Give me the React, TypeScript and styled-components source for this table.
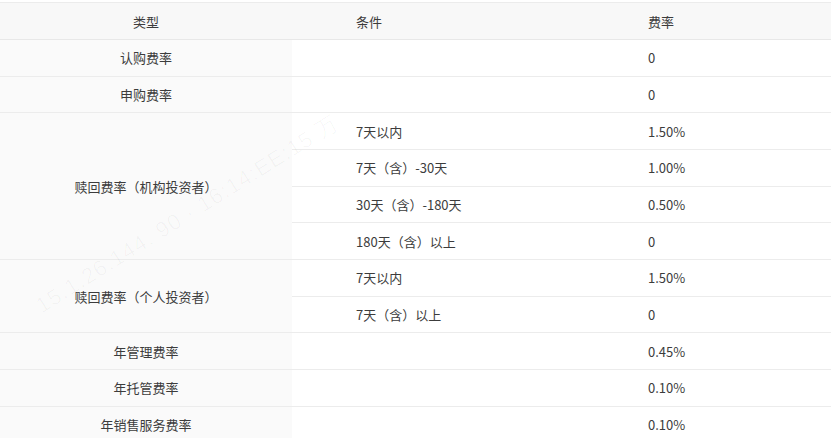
import React from "react";
import styled, { createGlobalStyle } from "styled-components";

const GlobalStyle = createGlobalStyle`
  html, body {
    margin: 0;
    padding: 0;
    background: #fff;
  }
  body {
    font-family: "Noto Sans CJK SC", "Noto Sans", sans-serif;
    color: #3c3c3c;
  }
`;

const Wrap = styled.div`
  position: relative;
  width: 832px;
  height: 438px;
  overflow: hidden;
  padding-top: 2px;
  box-sizing: border-box;
`;

const Table = styled.table`
  width: 831px;
  border-collapse: collapse;
  table-layout: fixed;
  font-size: 13px;
  border-top: 1px solid #ececec;
`;

const Th = styled.th<{ $left?: boolean }>`
  height: 36px;
  padding: 0 0 0 ${(p) => (p.$left ? "64px" : "0")};
  background: #f8f8f8;
  font-weight: normal;
  color: #3c3c3c;
  text-align: ${(p) => (p.$left ? "left" : "center")};
  border-bottom: 1px solid #e8e8e8;
`;

const TypeCell = styled.td`
  height: 35.67px;
  padding: 0;
  background: #fafafa;
  text-align: center;
  border-bottom: 1px solid #ececec;
`;

const Cell = styled.td`
  height: 35.67px;
  padding: 0 0 0 64px;
  background: #fff;
  text-align: left;
  border-bottom: 1px solid #ececec;
`;

const Watermark = styled.div`
  position: absolute;
  left: 30px;
  top: 295px;
  transform: rotate(-32deg);
  transform-origin: left top;
  font-family: "Liberation Sans", sans-serif;
  font-size: 22px;
  letter-spacing: 1px;
  color: rgba(0, 0, 0, 0.03);
  white-space: nowrap;
  pointer-events: none;
`;

type Row = { type?: string; span?: number; cond: string; rate: string };

const rows: Row[] = [
  { type: "认购费率", cond: "", rate: "0" },
  { type: "申购费率", cond: "", rate: "0" },
  { type: "赎回费率（机构投资者）", span: 4, cond: "7天以内", rate: "1.50%" },
  { cond: "7天（含）-30天", rate: "1.00%" },
  { cond: "30天（含）-180天", rate: "0.50%" },
  { cond: "180天（含）以上", rate: "0" },
  { type: "赎回费率（个人投资者）", span: 2, cond: "7天以内", rate: "1.50%" },
  { cond: "7天（含）以上", rate: "0" },
  { type: "年管理费率", cond: "", rate: "0.45%" },
  { type: "年托管费率", cond: "", rate: "0.10%" },
  { type: "年销售服务费率", cond: "", rate: "0.10%" },
];

export default function App() {
  return (
    <Wrap>
      <GlobalStyle />
      <Table>
        <colgroup>
          <col style={{ width: 292 }} />
          <col style={{ width: 292 }} />
          <col />
        </colgroup>
        <thead>
          <tr>
            <Th>类型</Th>
            <Th $left>条件</Th>
            <Th $left>费率</Th>
          </tr>
        </thead>
        <tbody>
          {rows.map((r, i) => (
            <tr key={i}>
              {r.type && <TypeCell rowSpan={r.span ?? 1}>{r.type}</TypeCell>}
              <Cell>{r.cond}</Cell>
              <Cell>{r.rate}</Cell>
            </tr>
          ))}
        </tbody>
      </Table>
      <Watermark>15.1.26.144. 90 · 16:14:EE:15 万</Watermark>
    </Wrap>
  );
}
